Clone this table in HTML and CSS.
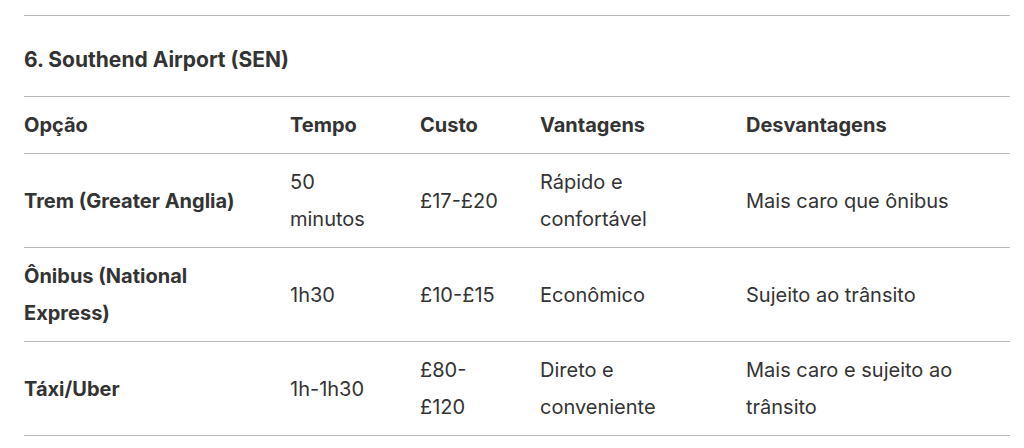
FILE: index.html
```html
<!DOCTYPE html>
<html lang="pt">
<head>
<meta charset="utf-8">
<title>Southend Airport</title>
<link rel="stylesheet" href="styles.css">
</head>
<body>
<div class="page">
  <hr class="divider">
  <h3 class="section-title">6. Southend Airport (SEN)</h3>
  <table class="options">
    <colgroup>
      <col class="c1"><col class="c2"><col class="c3"><col class="c4"><col class="c5">
    </colgroup>
    <thead>
      <tr><th>Opção</th><th>Tempo</th><th>Custo</th><th>Vantagens</th><th>Desvantagens</th></tr>
    </thead>
    <tbody>
      <tr><td class="name">Trem (Greater Anglia)</td><td>50 minutos</td><td>£17-£20</td><td>Rápido e confortável</td><td>Mais caro que ônibus</td></tr>
      <tr><td class="name">Ônibus (National Express)</td><td>1h30</td><td>£10-£15</td><td>Econômico</td><td>Sujeito ao trânsito</td></tr>
      <tr><td class="name">Táxi/Uber</td><td>1h-1h30</td><td>£80-£120</td><td>Direto e conveniente</td><td>Mais caro e sujeito ao trânsito</td></tr>
    </tbody>
  </table>
</div>
</body>
</html>
```

FILE: styles.css
```css
html, body {
  margin: 0;
  padding: 0;
  background: #fff;
}
body {
  font-family: Inter, "Noto Sans", "Liberation Sans", sans-serif;
  color: #333;
}
.page {
  width: 986px;
  padding: 15px 0 0 24px;
}
.divider {
  margin: 0;
  border: 0;
  border-top: 1px solid #b9b9b9;
  height: 0;
}
.section-title {
  margin: 32px 0 24px;
  font-size: 21px;
  line-height: 24px;
  font-weight: 700;
  color: #333;
}
.options {
  width: 100%;
  border-collapse: collapse;
  table-layout: fixed;
  border-top: 1px solid #b9b9b9;
  font-size: 20px;
  line-height: 37px;
}
.options col.c1 { width: 266px; }
.options col.c2 { width: 130px; }
.options col.c3 { width: 120px; }
.options col.c4 { width: 206px; }
.options th, .options td {
  text-align: left;
  vertical-align: middle;
  padding: 10px 36px 9px 0;
  border-bottom: 1px solid #b9b9b9;
}
.options th { font-weight: 700; }
.options td { font-weight: 400; }
.options td.name { font-weight: 700; }
```
